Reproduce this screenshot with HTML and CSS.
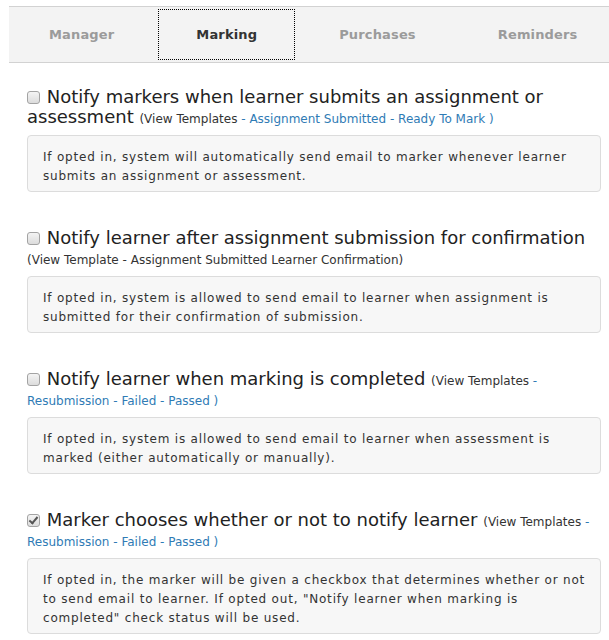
FILE: index.html
```html
<!DOCTYPE html>
<html lang="en">
<head>
<meta charset="utf-8">
<title>Notifications - Marking</title>
<link rel="stylesheet" href="styles.css">
</head>
<body>
<nav class="tabs">
  <a class="tab">Manager</a>
  <a class="tab active">Marking</a>
  <a class="tab">Purchases</a>
  <a class="tab">Reminders</a>
</nav>
<main class="content">
  <section class="opt">
    <div class="head">
      <label class="title"><input type="checkbox" class="cb"> Notify markers when learner submits an assignment or assessment</label>
      <span class="tpl">(View Templates <a>- Assignment Submitted - Ready To Mark )</a></span>
    </div>
    <div class="note">If opted in, system will automatically send email to marker whenever learner submits an assignment or assessment.</div>
  </section>
  <section class="opt">
    <div class="head">
      <label class="title"><input type="checkbox" class="cb"> Notify learner after assignment submission for confirmation</label>
      <span class="tpl">(View Template - Assignment Submitted Learner Confirmation)</span>
    </div>
    <div class="note">If opted in, system is allowed to send email to learner when assignment is submitted for their confirmation of submission.</div>
  </section>
  <section class="opt">
    <div class="head">
      <label class="title"><input type="checkbox" class="cb"> Notify learner when marking is completed</label>
      <span class="tpl">(View Templates <a>- Resubmission - Failed - Passed )</a></span>
    </div>
    <div class="note">If opted in, system is allowed to send email to learner when assessment is marked (either automatically or manually).</div>
  </section>
  <section class="opt">
    <div class="head">
      <label class="title"><input type="checkbox" class="cb" checked> Marker chooses whether or not to notify learner</label>
      <span class="tpl">(View Templates <a>- Resubmission - Failed - Passed )</a></span>
    </div>
    <div class="note">If opted in, the marker will be given a checkbox that determines whether or not to send email to learner. If opted out, "Notify learner when marking is completed" check status will be used.</div>
  </section>
</main>
</body>
</html>
```
FILE: styles.css
```css
html, body {
  margin: 0;
  padding: 0;
  background: #fff;
}
body {
  font-family: "DejaVu Sans", Verdana, sans-serif;
  color: #333;
  overflow: hidden;
}
.tabs {
  margin: 6px 0 0 9px;
  height: 55px;
  background: #f3f3f3;
  border-top: 1px solid #d2d2d2;
  border-bottom: 1px solid #d2d2d2;
  display: flex;
  align-items: flex-start;
  gap: 6px;
  padding-left: 2px;
  white-space: nowrap;
}
.tab {
  box-sizing: border-box;
  height: 51px;
  margin-top: 2px;
  padding: 0 38px;
  display: flex;
  align-items: center;
  font-size: 13px;
  font-weight: bold;
  letter-spacing: 0.15px;
  color: #9b9b9b;
}
.tab.active {
  color: #333;
  outline: 1px dotted #000;
  outline-offset: -1px;
}
.content {
  padding: 24px 8px 0 27px;
}
.opt {
  margin-bottom: 36px;
}
.head {
  font-size: 18px;
  line-height: 20px;
}
.title {
  font-size: 18px;
  color: #222;
}
.cb {
  appearance: none;
  -webkit-appearance: none;
  box-sizing: border-box;
  width: 13px;
  height: 13px;
  margin: 0 1px 0 0;
  border: 1px solid #a3a3a3;
  border-radius: 3px;
  background: linear-gradient(#f4f4f4, #dcdcdc);
  vertical-align: -1px;
  position: relative;
}
.cb:checked::after {
  content: "";
  position: absolute;
  left: 3px;
  top: 0px;
  width: 3px;
  height: 7px;
  border: solid #555;
  border-width: 0 2px 2px 0;
  transform: rotate(40deg);
}
.tpl {
  font-family: "DejaVu Sans", sans-serif;
  font-size: 12px;
  line-height: 1;
  color: #333;
}
.tpl a {
  color: #2f7bb5;
}
.note {
  margin-top: 8px;
  border: 1px solid #dcdcdc;
  border-radius: 4px;
  background: #f7f7f7;
  padding: 12px 8px 5px 15px;
  font-size: 12px;
  letter-spacing: 0.8px;
  line-height: 19px;
  color: #333;
}
```
